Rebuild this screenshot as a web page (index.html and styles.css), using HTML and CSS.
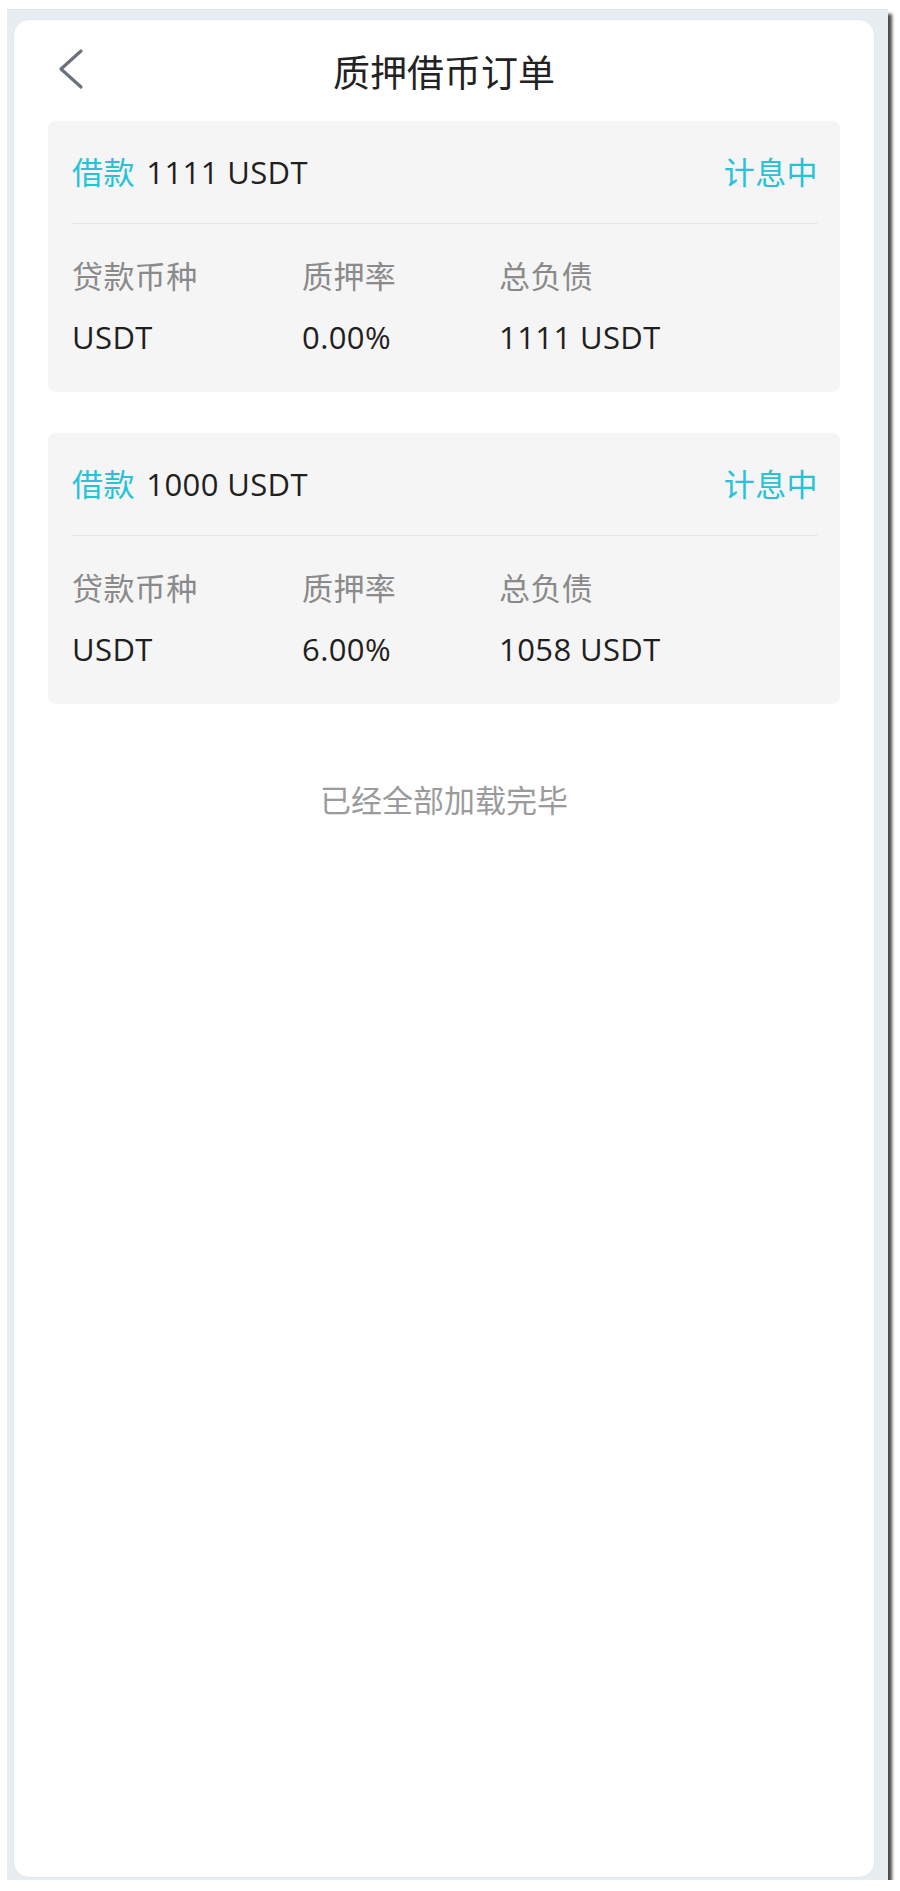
FILE: index.html
```html
<!DOCTYPE html>
<html lang="zh-CN">
<head>
  <meta charset="UTF-8" />
  <meta name="viewport" content="width=device-width, initial-scale=1.0"/>
  <title>质押借币订单</title>
  <link rel="stylesheet" href="styles.css">
</head>
<body>
  <div class="window">
    <div class="page">
      <header class="topbar">
        <a class="back" href="#">
          <svg width="26" height="42" viewBox="0 0 26 42"><polyline points="23,3 3,21 23,39" fill="none" stroke="#6b727e" stroke-width="3.2" stroke-linecap="round" stroke-linejoin="round"/></svg>
        </a>
        <h1>质押借币订单</h1>
        <span></span>
      </header>

      <div class="list">
        <div class="order">
          <div class="order-head">
            <p><span class="hl">借款</span> 1111 USDT</p>
            <span class="hl">计息中</span>
          </div>
          <div class="order-body">
            <span class="label">贷款币种</span>
            <span class="label">质押率</span>
            <span class="label">总负债</span>
            <span class="value">USDT</span>
            <span class="value">0.00%</span>
            <span class="value">1111 USDT</span>
          </div>
        </div>

        <div class="order">
          <div class="order-head">
            <p><span class="hl">借款</span> 1000 USDT</p>
            <span class="hl">计息中</span>
          </div>
          <div class="order-body">
            <span class="label">贷款币种</span>
            <span class="label">质押率</span>
            <span class="label">总负债</span>
            <span class="value">USDT</span>
            <span class="value">6.00%</span>
            <span class="value">1058 USDT</span>
          </div>
        </div>

        <p class="finished">已经全部加载完毕</p>
      </div>
    </div>
  </div>
</body>
</html>
```

FILE: styles.css
```css
body { margin: 0; background: #fff; font-family: 'Open Sans', 'Noto Sans CJK SC', sans-serif; color: #1f1f1f; }
.window {
  margin: 9px 12px 0 7px; width: 881px; height: 1871px; box-sizing: border-box;
  padding: 9px 13px 2px 6px; background: #e8edf2; border-top: 1px solid #dfe5eb;
  box-shadow: 4px 5px 3px rgba(30, 30, 30, 0.8);
}
.page {
  height: 100%; box-sizing: border-box; background: #fff; border-radius: 16px;
  border: 1px solid #e3e7eb; padding: 0 34px 0 34px;
}
.topbar {
  display: grid; grid-template-columns: 1fr auto 1fr; align-items: center;
  height: 101px; box-sizing: border-box; padding-bottom: 4px;
}
.back { display: flex; padding-left: 10px; }
.topbar h1 { margin: 0; padding-top: 8px; font-size: 37px; font-weight: normal; color: #222; line-height: 48px; }
.order { background: #f5f5f5; border-radius: 8px; padding: 0 22px 0 24px; margin-bottom: 41px; }
.order-head {
  display: flex; justify-content: space-between; align-items: center;
  height: 103px; box-sizing: border-box; padding-bottom: 4px;
  border-bottom: 1px solid #e6e6e6; font-size: 31px; letter-spacing: 0.4px;
}
.order-head p { margin: 0; }
.order-head p .hl { margin-right: 3px; }
.hl { color: #27c2d7; }
.order-body {
  display: grid; grid-template-columns: 230px 197px 1fr; row-gap: 19px;
  padding: 31px 0 34px; font-size: 31px; line-height: 42px; letter-spacing: 0.4px;
}
.label { color: #8a8a8a; }
.value { color: #1f1f1f; }
.finished { margin: 75px 0 0; text-align: center; font-size: 31px; line-height: 42px; color: #9b9b9b; }
```
